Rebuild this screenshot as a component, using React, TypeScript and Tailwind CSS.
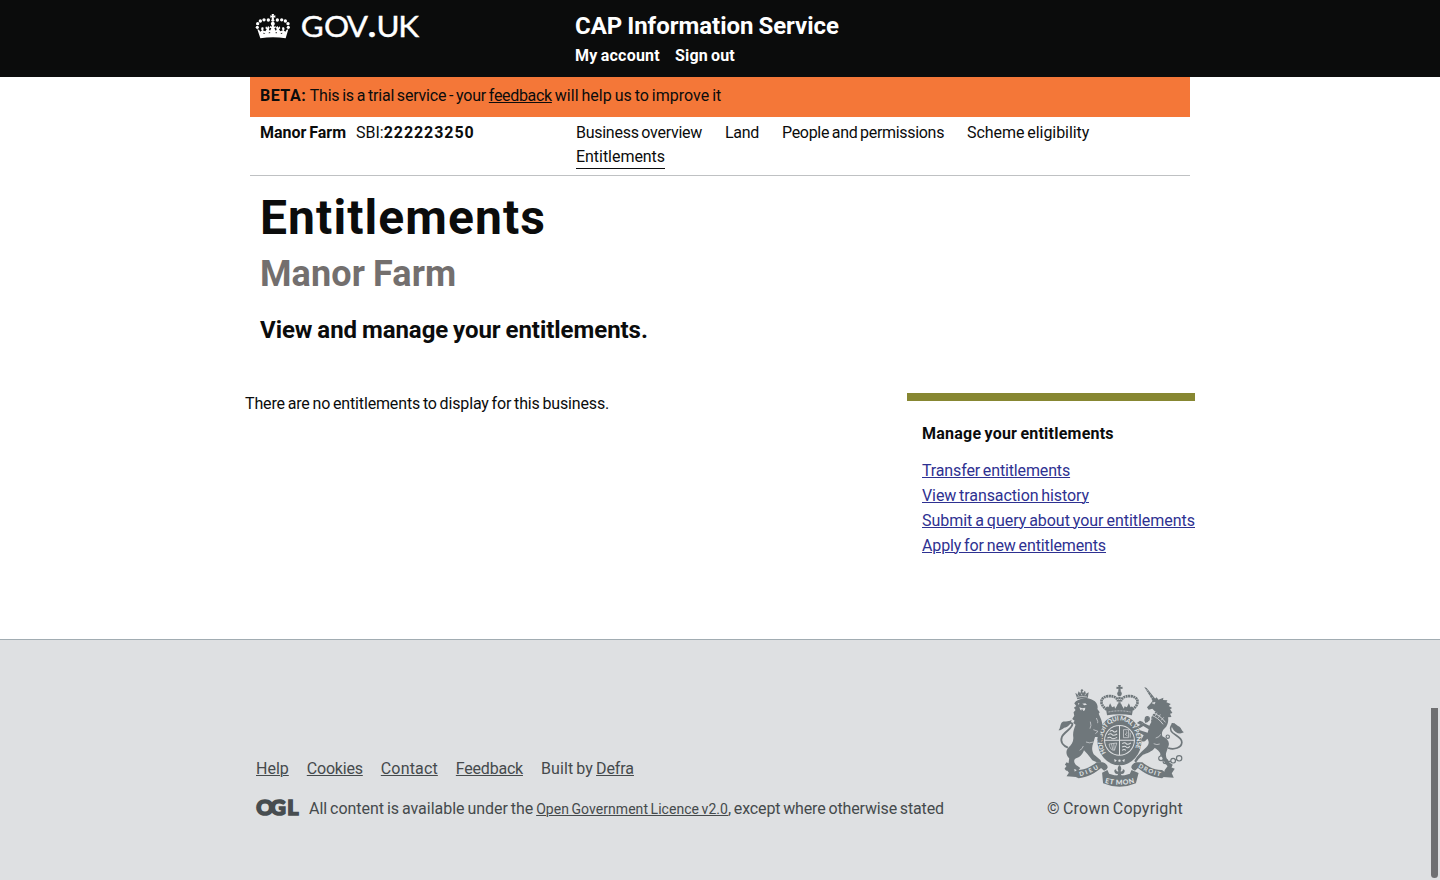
import type { ReactNode } from "react";

function CrownLogo() {
  return (
    <svg viewBox="30 39 396 81" className="block h-[27px] w-[132px] overflow-visible" fill="#fff">
      {/* cross on top */}
      <path d="M80 42h7l-1 5 5-1v7l-5-1 1 5h-7l1-5-5 1v-7l5 1z" />
      <circle cx="83.500" cy="61" r="4.500" />
      {/* pearls along the arches */}
      <circle cx="70" cy="60" r="5" />
      <circle cx="57" cy="59.500" r="5" />
      <circle cx="46" cy="63" r="5" />
      <circle cx="38" cy="71" r="5" />
      <circle cx="37" cy="82" r="4.800" />
      <circle cx="97" cy="60" r="5" />
      <circle cx="110" cy="59.500" r="5" />
      <circle cx="121" cy="63" r="5" />
      <circle cx="129" cy="71" r="5" />
      <circle cx="130" cy="82" r="4.800" />
      <circle cx="83.500" cy="71" r="6" />
      {/* base with crosses and fleurs */}
      <path d="M37 88l5 1 4 6 5-4-3-3 2-6h5l1 6-3 3 8 3 4-6-4-3 2-6 4 4 2-5 5 4-2 7 3 3 4-7-4-2v-5l5 2 1-5h5l1 5 5-2v5l-4 2 4 7 3-3-2-7 5-4 2 5 4-4 2 6-4 3 4 6 8-3-3-3 1-6h5l2 6-3 3 5 4 4-6 5-1-8 27q-38-6-76 0z" />
      <path d="M55 98l6 2-5 2zM72 96l5 3-6 1zM95 96l-5 3 6 1zM112 98l-6 2 5 2z" fill="#0b0c0c" />
      <g transform="scale(1.07 1)" stroke="#fff" strokeWidth="1.200" style={{ fontFamily: "Lato, sans-serif" }}>
        <text x="156 221.500 285" y="112" fontSize="88">GOV</text>
        <text x="344" y="111" fontSize="100" fontWeight="700">.</text>
        <text x="368.500 430" y="112" fontSize="88">UK</text>
      </g>
    </svg>
  );
}

function OglMark() {
  return (
    <svg viewBox="0 0 43 18" className="block h-[18px] w-[43px] overflow-visible" fill="#474d50" stroke="#474d50" strokeWidth="1.600">
      <text x="0.200 14.300 31.200" y="16.200" fontSize="21.500" fontWeight="900" style={{ fontFamily: "Lato, sans-serif" }}>OGL</text>
    </svg>
  );
}

function RoyalArms() {
  return (
    <svg viewBox="26.500 15 376 309" preserveAspectRatio="none" className="block h-[103px] w-[126px]" fill="#6f777b">
      <defs>
        <path id="garter" d="M170 219A51 60 0 1 1 250 219" />
        <path id="motto-left" d="M92 289Q120 282 151 264" />
        <path id="motto-mid" d="M166 308Q210 321 256 308" />
        <path id="motto-right" d="M265 261Q295 281 335 290" />
      </defs>

      {/* crown */}
      <path d="M206 15h8l-1 6 6-1v7l-6-1 1 9h-8l1-9-6 1v-7l6 1z" />
      <circle cx="210" cy="41" r="7" />
      <g fill="none" stroke="#6f777b">
        <path d="M172 89C146 70 154 49 180 48C197 48 203 55 206 64M248 89C274 70 266 49 240 48C223 48 217 55 214 64" strokeWidth="8" strokeDasharray="6 1.500" />
        <path d="M210 43V86" strokeWidth="7" strokeDasharray="6 2" />
      </g>
      <path d="M169 84q3-8 8-2l5-12 6 12 7-3 2 7 5-8 3-7h10l3 7 5 8 2-7 7 3 6-12 5 12q5-6 8 2l-4 22q-37-7-74 0z" />
      <path d="M177 96q33-7 66 0" fill="none" stroke="#dee0e2" strokeWidth="2" strokeDasharray="6 3" />

      {/* garter and shield */}
      <ellipse cx="210" cy="181" rx="66" ry="75" />
      <text fontSize="19" fontWeight="900" fill="#dee0e2" style={{ fontFamily: "Lato, sans-serif" }}>
        <textPath href="#garter" textLength="236">HONI SOIT QUI MAL Y PENSE</textPath>
      </text>
      <circle cx="210" cy="181" r="46" fill="#dee0e2" />
      <circle cx="210" cy="181" r="43" />
      <path d="M210 137v88M166 181h88" stroke="#dee0e2" strokeWidth="3" />
      <g stroke="#dee0e2" fill="none" strokeWidth="3">
        <path d="M181 154q7-5 11 0t11-2M176 164q8-5 12 0t15-2M174 174q8-5 12 0t17-2" />
        <path d="M222 149h15v24h-15zM229 154l4 4-6 5 7 5M242 158v15" strokeWidth="2" />
        <path d="M179 192q2 19 16 19l7-22zM186 191l4 18M193 190l1 20" strokeWidth="2" />
        <path d="M218 191q8-5 12 0t14-2M218 201q8-5 12 0t11-2M218 211q6-5 11 0" />
      </g>
      <path d="M194 237l8 4-6 6zM226 237l-8 4 6 6z" fill="#dee0e2" />
      <circle cx="210" cy="242" r="3.500" fill="#dee0e2" />

      {/* lion */}
      <path d="M82 50l-4-11 7 4 3-9 5 6 3-10 5 9 6-7 3 9 8-4-2 13 -3 8q-15-5-29 0z" />
      <path d="M83 52q14-5 30-1M84 43l4 4M96 41l2 5M109 41l-2 5" stroke="#dee0e2" strokeWidth="2" fill="none" />
      <circle cx="98" cy="31" r="3.500" />
      <path d="M80 64C95 54 116 52 130 60C142 65 147 77 144 87L151 97L148 101L155 118C160 132 160 142 156 149L151 161C158 168 160 181 153 190C146 185 143 179 146 171L137 171L132 188C127 201 127 211 133 223L153 240L157 248L142 247L129 241L115 223L104 211C100 224 90 233 78 236C72 240 74 252 85 258L93 264L86 272L76 267L69 273L60 270L51 272L46 266L52 258L47 254L52 247L58 250L60 235C50 226 49 213 57 203C67 194 74 184 72 170C70 156 75 145 79 134L72 129L76 122L69 117L75 107L73 97L79 90L74 83L81 78L75 70Z" />
      <path d="M99 71l9-1 5 4-8 2zM86 69l5 2-4 3zM90 82l9 3 9-2-1 7q-4 4-9 2-6-1-8-10z" fill="#dee0e2" />
      <path d="M96 88l6 1-2 8-4-3z" />
      <path d="M132 149l14 5-8 7M110 186q10 5 22 0M91 211q9-4 11-13M123 125q4 12-1 21M141 114q6 10 4 20" stroke="#dee0e2" strokeWidth="2" fill="none" />
      <path d="M137 133L154 125L159 132L151 139L157 145L145 151Z" />
      <path d="M56 203C44 198 32 187 38 171C43 158 61 150 67 139C73 130 66 126 58 131" fill="none" stroke="#6f777b" strokeWidth="5.500" />
      <path d="M28 151C34 145 32 135 37 128C44 120 56 128 67 119C66 132 55 142 45 143C40 147 35 151 28 151Z" />

      {/* unicorn */}
      <path d="M284 21L291 24L318 58L310 65L301 49Z" />
      <path d="M291 28l3 5M297 35l-4 6M303 43l-4 6M309 51l-5 6" stroke="#dee0e2" strokeWidth="1.500" />
      <path d="M309 62L321 52L326 59L341 53L340 60L353 61L350 67L363 72L357 78L367 84L361 88L368 99L361 101L365 111L355 112C357 126 353 137 345 145C337 153 335 159 338 169C353 176 361 186 356 199L349 219C347 230 352 241 360 248L369 254L364 265L355 260L346 250L337 231C330 216 327 211 315 204C307 215 292 220 280 224L267 237L259 248L254 243L262 230L275 216L290 202C300 192 298 182 293 176C285 187 277 187 275 179L282 166L267 157L271 151L294 158L297 148L281 138L270 145L264 140L281 128L299 137L305 126C302 112 308 103 317 95L308 86L297 89L292 82L302 71Z" />
      <path d="M308 69l8-2-2 5zM303 105q22 7 37 28M309 98q23 8 38 29" stroke="#dee0e2" strokeWidth="2.500" fill="none" />
      <path d="M307 103l10-8M317 108l5-10M326 114l6-11M334 121l8-9" stroke="#dee0e2" strokeWidth="2" />
      <path d="M302 104l-7 5 4 9 9-1M318 174q11-2 15-11M312 191q10 5 18 1" stroke="#dee0e2" strokeWidth="2" fill="none" />
      <path d="M262 129l9-7 11 5-9 8zM284 120l8-11 7 5-4 12-8 3z" />
      <path d="M355 204C373 210 395 204 396 187C396 169 370 166 364 153C359 143 366 132 375 133" fill="none" stroke="#6f777b" strokeWidth="5" />
      <path d="M366 129C376 127 380 136 389 140C395 144 395 152 402 157C389 165 374 157 369 146C366 140 363 134 366 129Z" />
      <g fill="none" stroke="#6f777b" strokeWidth="3.500">
        <circle cx="293" cy="116" r="6" />
        <circle cx="334" cy="235" r="7" />
        <circle cx="347" cy="244" r="7" />
        <circle cx="370" cy="242" r="7" />
        <circle cx="388" cy="235" r="8" />
        <circle cx="354" cy="170" r="5" />
        <path d="M341 211q-8 8-8 17M354 244h10M376 240l5-2" />
      </g>

      {/* scroll */}
      <path d="M68 281L83 270C108 271 127 259 142 247L160 247Q173 251 175 262Q174 269 164 272L155 264C139 279 113 292 88 295Q78 291 68 281Z" />
      <path d="M352 281L337 270C312 271 293 259 278 247L260 247Q247 251 245 262Q246 269 256 272L265 264C281 279 309 292 337 295Q346 290 352 281Z" />
      <path d="M340 291L372 293L366 280L375 266L354 258L345 270ZM80 291L52 289L59 278L50 266L75 268Z" />
      <path d="M158 278L174 270L179 281Q210 292 241 281L246 270L267 279L259 310Q210 331 161 310Z" />
      <g fontSize="18" fontWeight="900" fill="#dee0e2" style={{ fontFamily: "Lato, sans-serif" }}>
        <text><textPath href="#motto-left" textLength="61">DIEU</textPath></text>
        <text fontSize="21"><textPath href="#motto-mid" textLength="90">ET MON</textPath></text>
        <text><textPath href="#motto-right" textLength="72">DROIT</textPath></text>
      </g>

      {/* fleur below the shield */}
      <path d="M210 255q-9 9-3 19-8 2-7-6-7 0-5 8 3 8 11 5l-3 8h14l-3-8q8 3 11-5 2-8-5-8 1 8-7 6 6-10-3-19z" />
    </svg>
  );
}

function NavLink({ children, className }: { children: ReactNode; className?: string }) {
  return <a href="#" className={`whitespace-nowrap ${className ?? ""}`}>{children}</a>;
}

export default function App() {
  return (
    <div className="relative flex h-[880px] w-full flex-col overflow-hidden bg-white font-[Roboto,sans-serif] text-base text-[#0b0c0c] [word-spacing:-1px]">
      <header className="h-[77px] shrink-0 bg-[#0b0c0c] text-white">
        <div className="mx-auto flex w-[940px]">
          <a href="#" className="w-[325px] pt-[13px] pl-[5px]">
            <CrownLogo />
          </a>
          <div className="pt-[11px] font-bold">
            <div className="text-2xl leading-[30px] tracking-[-0.02px]">CAP Information Service</div>
            <nav className="mt-[5px] flex gap-[15px] leading-5">
              <a href="#" className="tracking-[0.23px]">My account</a>
              <a href="#" className="tracking-[0.17px]">Sign out</a>
            </nav>
          </div>
        </div>
      </header>

      <div className="mx-auto w-[940px] shrink-0">
        <div className="h-10 whitespace-pre bg-[#f47738] px-2.5 pt-[9px] leading-5">
          <b className="mr-px tracking-[0.5px]">BETA:</b>
          <span className="tracking-[-0.2px]"> This is a trial service - your </span>
          <a href="#" className="tracking-[-0.31px] underline decoration-1 underline-offset-1">feedback</a>
          <span> will help us to improve it</span>
        </div>
        <div className="flex h-[59px] border-b border-[#bfc1c3] pt-1 pl-2.5">
          <div className="flex w-[316px] gap-2.5 pt-0.5 leading-5">
            <b className="tracking-[-0.02px]">Manor Farm</b>
            <span>SBI:<b className="tracking-[0.92px]">222223250</b></span>
          </div>
          <nav className="flex flex-1 flex-wrap content-start gap-x-[23px] leading-6">
            <NavLink className="tracking-[-0.27px]">Business overview</NavLink>
            <NavLink className="tracking-[-0.3px]">Land</NavLink>
            <NavLink className="tracking-[-0.31px]">People and permissions</NavLink>
            <NavLink className="mr-20 tracking-[-0.06px]">Scheme eligibility</NavLink>
            <NavLink className="h-6 border-b border-[#0b0c0c] tracking-[-0.04px]">Entitlements</NavLink>
          </nav>
        </div>
      </div>

      <main className="mx-auto w-[950px] flex-1">
        <div className="pt-[17px] pl-[15px] font-bold">
          <h1 className="text-[48px] leading-[50px] tracking-[1.08px]">Entitlements</h1>
          <h2 className="mt-[11px] text-[36px] leading-10 tracking-[0.1px] text-[#736f6e]">Manor Farm</h2>
          <p className="mt-[21px] text-2xl leading-[30px] tracking-[-0.05px]">View and manage your entitlements.</p>
        </div>
        <div className="mt-[48px] flex justify-between">
          <p className="-mt-0.5 leading-[25px] tracking-[-0.15px]">There are no entitlements to display for this business.</p>
          <aside className="w-[288px] border-t-8 border-[#878732] pt-5 pl-[15px] leading-[25px]">
            <h3 className="font-bold tracking-[0.23px]">Manage your entitlements</h3>
            <ul className="mt-3 whitespace-nowrap text-[#2e3191] underline decoration-1 underline-offset-1">
              <li className="tracking-[-0.14px]"><a href="#">Transfer entitlements</a></li>
              <li className="tracking-[-0.09px]"><a href="#">View transaction history</a></li>
              <li className="tracking-[-0.03px]"><a href="#">Submit a query about your entitlements</a></li>
              <li className="tracking-[-0.12px]"><a href="#">Apply for new entitlements</a></li>
            </ul>
          </aside>
        </div>
      </main>

      <footer className="h-[241px] shrink-0 border-t border-[#a1acb2] bg-[#dee0e2] text-[#454a4c]">
        <div className="mx-auto flex w-[928px] items-end justify-between pt-[45px]">
          <div>
            <div className="flex gap-[18px] whitespace-nowrap leading-5">
              <a href="#" className="underline decoration-1 underline-offset-1">Help</a>
              <a href="#" className="tracking-[-0.2px] underline decoration-1 underline-offset-1">Cookies</a>
              <a href="#" className="tracking-[0.16px] underline decoration-1 underline-offset-1">Contact</a>
              <a href="#" className="tracking-[-0.22px] underline decoration-1 underline-offset-1">Feedback</a>
              <span className="tracking-[0.1px]">Built by <a href="#" className="tracking-[-0.1px] underline decoration-1 underline-offset-1">Defra</a></span>
            </div>
            <div className="mt-5 flex gap-2.5">
              <OglMark />
              <p className="whitespace-pre leading-5">
                <span className="tracking-[-0.03px]">All content is available under the </span>
                <a href="#" className="text-sm leading-5 tracking-[0.05px] underline decoration-1 underline-offset-1">Open Government Licence v2.0</a>
                <span className="tracking-[-0.14px]">, except where otherwise stated</span>
              </p>
            </div>
          </div>
          <div className="flex flex-col items-end">
            <RoyalArms />
            <p className="mt-[11px] mr-px leading-5 tracking-[0.2px]">© Crown Copyright</p>
          </div>
        </div>
      </footer>

      <div className="absolute top-[708px] right-[2px] h-[170px] w-[7px] rounded-b-full bg-[#6f7072]" />
    </div>
  );
}
